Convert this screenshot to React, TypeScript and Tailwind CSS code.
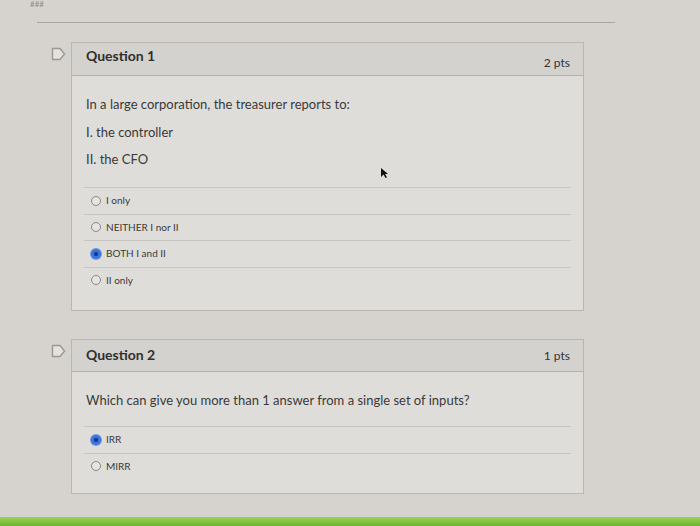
import React from "react";

interface Option {
  label: string;
  selected?: boolean;
}

interface Question {
  title: string;
  points: string;
  text: string[];
  options: Option[];
}

const questions: Question[] = [
  {
    title: "Question 1",
    points: "2 pts",
    text: [
      "In a large corporation, the treasurer reports to:",
      "I. the controller",
      "II. the CFO",
    ],
    options: [
      { label: "I only" },
      { label: "NEITHER I nor II" },
      { label: "BOTH I and II", selected: true },
      { label: "II only" },
    ],
  },
  {
    title: "Question 2",
    points: "1 pts",
    text: ["Which can give you more than 1 answer from a single set of inputs?"],
    options: [{ label: "IRR", selected: true }, { label: "MIRR" }],
  },
];

function Bookmark() {
  return (
    <svg width="15" height="14" viewBox="0 0 15 14" className="mt-[5px]">
      <path
        d="M1.5 1.5 H9 L13.5 7 L9 12.5 H1.5 Z"
        fill="#e4e2de"
        stroke="#9a9894"
        strokeWidth="1.4"
        strokeLinejoin="round"
      />
    </svg>
  );
}

function Radio({ selected }: { selected?: boolean }) {
  if (selected) {
    return (
      <span className="flex h-[10px] w-[10px] items-center justify-center rounded-full bg-[#3b74d8] ring-1 ring-[#6f98e0]">
        <span className="h-[4px] w-[4px] rounded-full bg-[#10308a]" />
      </span>
    );
  }
  return <span className="h-[10px] w-[10px] rounded-full border border-[#8a8884] bg-[#e6e4e0]" />;
}

function QuestionCard({ q, first }: { q: Question; first: boolean }) {
  return (
    <div className="flex">
      <div className="w-[21px] pl-[1px]">
        <Bookmark />
      </div>
      <div className="w-[513px] border border-[#b9b7b3] bg-[#dfddd9]">
        <div
          className={`flex items-center justify-between border-b border-[#b3b1ad] bg-[#d4d2ce] pl-[14px] pr-[13px] ${
            first ? "h-[33px]" : "h-[32px]"
          }`}
        >
          <span
            className={`text-[14px] font-bold text-[#2f2f2f] ${first ? "-mt-[7px]" : "-mt-[3px]"}`}
          >
            {q.title}
          </span>
          <span className={`text-[12px] text-[#333] ${first ? "mt-[7px]" : "mt-[1px]"}`}>
            {q.points}
          </span>
        </div>
        <div className={`px-[12px] ${first ? "pb-[17px]" : "pb-[14px]"}`}>
          <div className={`pl-[2px] ${first ? "pt-[19px] pb-[19px]" : "pt-[19px] pb-[17px]"}`}>
            {q.text.map((t, i) => (
              <p
                key={i}
                className={`text-[13px] leading-[18px] text-[#3a3a3a] ${i > 0 ? "mt-[9.5px]" : ""}`}
              >
                {t}
              </p>
            ))}
          </div>
          {q.options.map((o) => (
            <div
              key={o.label}
              className="flex h-[26.5px] items-center gap-[5px] border-t border-[#c7c5c1] pl-[7px]"
            >
              <Radio selected={o.selected} />
              <span className="text-[10px] text-[#3a3a3a]">{o.label}</span>
            </div>
          ))}
        </div>
      </div>
    </div>
  );
}

export default function App() {
  return (
    <div
      className="relative h-[526px] w-[700px] overflow-hidden bg-[#d6d3ce]"
      style={{ fontFamily: "Lato, 'Open Sans', sans-serif" }}
    >
      <div className="pl-[30px] pt-[0px] text-[8px] leading-[8px] text-[#8d8b87]">###</div>
      <div className="ml-[37px] mt-[14px] h-px w-[578px] bg-[#a9a7a3]" />
      <div className="ml-[50px] mt-[19px] flex flex-col gap-[28px]">
        {questions.map((q, i) => (
          <QuestionCard key={q.title} q={q} first={i === 0} />
        ))}
      </div>
      {/* mouse pointer */}
      <svg className="absolute left-[380px] top-[167px]" width="9" height="12" viewBox="0 0 9 12">
        <path d="M1 1 L1 10 L3.5 7.5 L5.5 11 L7 10.3 L5 7 L8 7 Z" fill="#111" />
      </svg>
      <div className="absolute bottom-0 left-0 h-[9px] w-full bg-gradient-to-b from-[#9ed255] to-[#6cb52e]" />
    </div>
  );
}
